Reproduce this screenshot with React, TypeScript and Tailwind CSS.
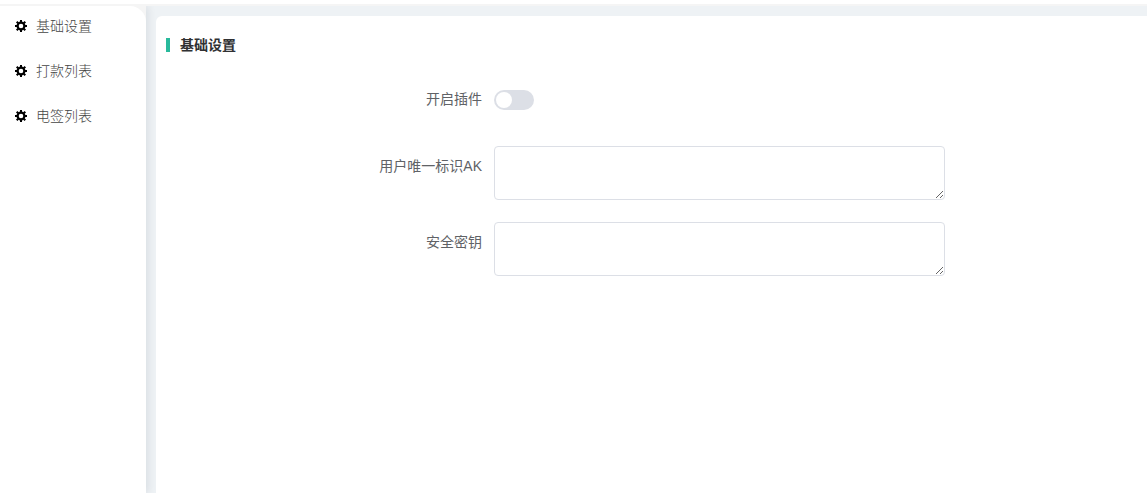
import React, { useState } from 'react';

type MenuKey = 'base' | 'payment' | 'sign';

const MENU: { key: MenuKey; label: string }[] = [
  { key: 'base', label: '基础设置' },
  { key: 'payment', label: '打款列表' },
  { key: 'sign', label: '电签列表' },
];

const App: React.FC = () => {
  const [enabled, setEnabled] = useState(false);
  const [accessKey, setAccessKey] = useState('');
  const [secret, setSecret] = useState('');

  return (
    <div className="flex min-h-screen flex-col border-t-4 border-white bg-[#f5f5f5] pt-0.5 font-['Liberation_Sans','Noto_Sans_CJK_SC',sans-serif] text-sm text-[#606266]">
      <div className="flex flex-1 overflow-hidden">
        <aside className="z-10 flex w-[146px] shrink-0 bg-[#f5f5f5] shadow-[2px_0_8px_rgba(0,21,41,0.09)]">
          <nav className="flex-1 rounded-tr-2xl bg-white">
            {MENU.map((item) => (
              <SidebarItem key={item.key} id={item.key} label={item.label} />
            ))}
          </nav>
        </aside>

        <main className="flex flex-1 bg-[#eef2f5] pt-2.5 pl-2.5">
          <section className="z-20 flex-1 rounded-tl-md bg-white pt-5 pl-2.5">
            <h1 className="flex items-center gap-2.5 text-sm leading-[18px] font-bold text-[#303133]">
              <span className="h-3.5 w-1 bg-[#29ba9c]" />
              基础设置
            </h1>

            <form className="pt-[25px]" onSubmit={(e) => e.preventDefault()}>
              <FormItem id="enabled" label="开启插件">
                <input
                  id="enabled"
                  type="checkbox"
                  role="switch"
                  checked={enabled}
                  onChange={(e) => setEnabled(e.target.checked)}
                  className="mt-[11px] mb-9 block h-5 w-10 cursor-pointer appearance-none rounded-full bg-[#dcdfe6] p-0.5 transition-colors before:block before:h-4 before:w-4 before:rounded-full before:bg-white before:transition-transform checked:bg-[#29ba9c] checked:before:translate-x-5"
                />
              </FormItem>
              <FormItem id="ak" label="用户唯一标识AK">
                <TextArea id="ak" value={accessKey} onChange={setAccessKey} />
              </FormItem>
              <FormItem id="secret" label="安全密钥">
                <TextArea id="secret" value={secret} onChange={setSecret} />
              </FormItem>
            </form>
          </section>
        </main>
      </div>
    </div>
  );
};

const SidebarItem = ({ id, label }: { id: string; label: string }) => (
  <a href={`#${id}`} className="mb-[5px] flex h-10 items-center gap-2 pl-3.5 font-light text-[#444]">
    <GearIcon />
    {label}
  </a>
);

const FormItem = ({ id, label, children }: { id: string; label: string; children: React.ReactNode }) => (
  <div className="flex">
    <label htmlFor={id} className="w-[328px] shrink-0 pr-3 text-right leading-10">
      {label}
    </label>
    <div className="flex-1">{children}</div>
  </div>
);

const TextArea = ({ id, value, onChange }: { id: string; value: string; onChange: (v: string) => void }) => (
  <textarea
    id={id}
    rows={2}
    value={value}
    onChange={(e) => onChange(e.target.value)}
    className="mb-[22px] block h-[54px] w-[69%] resize-y rounded border border-[#dcdfe6] bg-white px-4 py-1 leading-5 outline-none focus:border-[#29ba9c]"
  />
);

const GearIcon = () => (
  <svg className="h-3.5 w-3.5 text-black" viewBox="0 0 14 14" fill="none" stroke="currentColor" aria-hidden="true">
    <circle cx="7" cy="7" r="3.4" strokeWidth="2.2" />
    <path d="M7 1v2.5M7 10.5V13M1 7h2.5M10.5 7H13M2.7 2.7l1.6 1.6M9.7 9.7l1.6 1.6M2.7 11.3l1.6-1.6M9.7 4.3l1.6-1.6" strokeWidth="2" />
  </svg>
);

export default App;
